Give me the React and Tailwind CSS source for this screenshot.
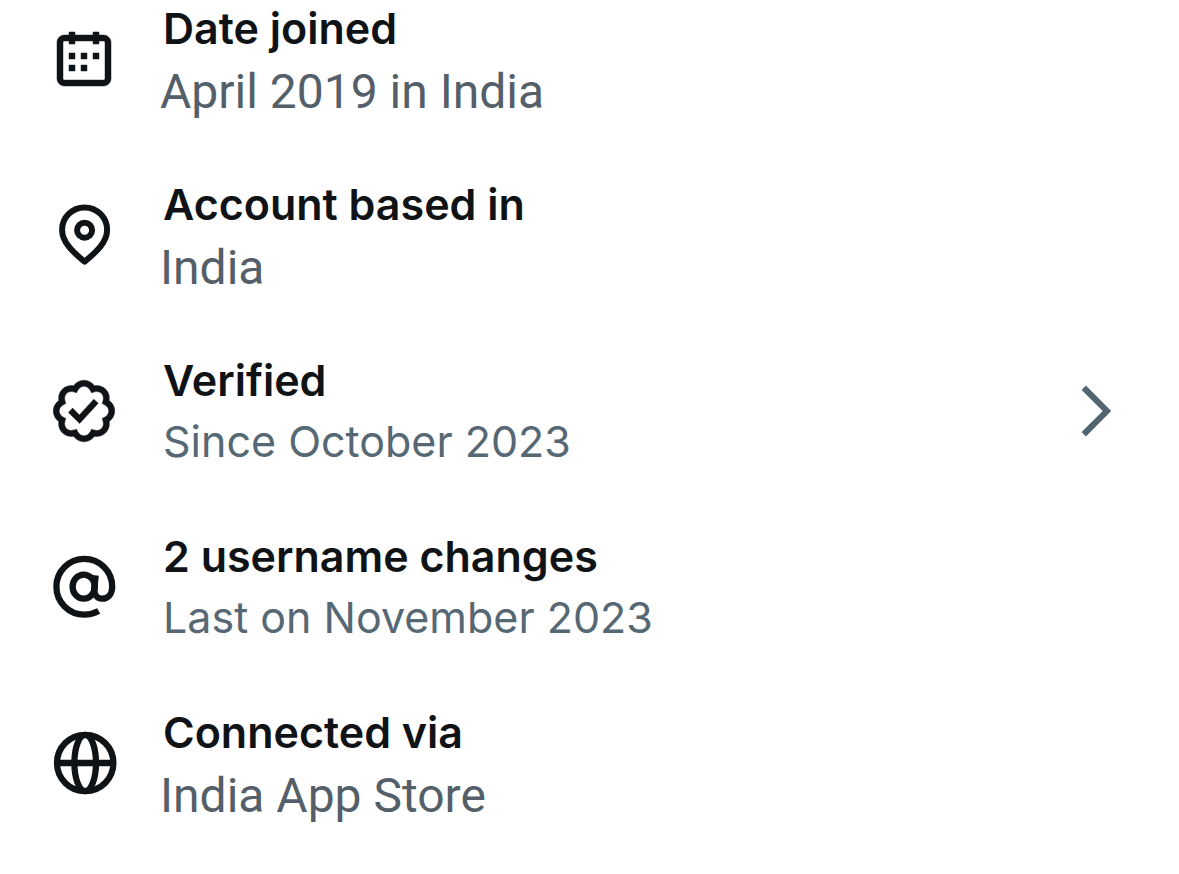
import React from 'react';

const CalendarIcon = () => (
  <svg viewBox="0 0 24 24" fill="currentColor" stroke="currentColor" strokeWidth="0.15" aria-hidden="true" className="size-18">
    <path d="M7 4V3h2v1h6V3h2v1h1.5C19.89 4 21 5.12 21 6.5v12c0 1.38-1.11 2.5-2.5 2.5h-13C4.12 21 3 19.88 3 18.5v-12C3 5.12 4.12 4 5.5 4H7zm0 2H5.5c-.27 0-.5.22-.5.5v12c0 .28.23.5.5.5h13c.28 0 .5-.22.5-.5v-12c0-.28-.22-.5-.5-.5H17v1h-2V6H9v1H7V6zm0 6h2v-2H7v2zm0 4h2v-2H7v2zm4-4h2v-2h-2v2zm0 4h2v-2h-2v2zm4-4h2v-2h-2v2z" />
  </svg>
);

const LocationIcon = () => (
  <svg viewBox="0 0 24 24" fill="none" stroke="currentColor" strokeWidth="2" strokeLinejoin="round" aria-hidden="true" className="size-18">
    <circle cx="12.2" cy="10.4" r="2.5" />
    <path d="M12.2 20.9C8.2 17.6 4.7 14.3 4.7 10.3a7.5 7.5 0 0 1 15 0c0 4-3.5 7.3-7.5 10.6z" />
  </svg>
);

const VerifiedIcon = () => (
  <svg viewBox="0 0 24 24" fill="currentColor" stroke="currentColor" strokeWidth="0.15" aria-hidden="true" className="size-18">
    <path d="M8.52 3.59c.8-1.1 2.04-1.84 3.48-1.84s2.68.74 3.49 1.84c1.34-.21 2.74.14 3.76 1.16s1.37 2.42 1.16 3.77c1.1.8 1.84 2.04 1.84 3.48s-.74 2.68-1.84 3.48c.21 1.34-.14 2.75-1.16 3.77s-2.42 1.37-3.76 1.16c-.8 1.1-2.05 1.84-3.49 1.84s-2.68-.74-3.48-1.84c-1.34.21-2.75-.14-3.77-1.16-1.01-1.02-1.37-2.42-1.16-3.77-1.09-.8-1.84-2.04-1.84-3.48s.75-2.68 1.84-3.48c-.21-1.35.14-2.75 1.16-3.77s2.43-1.37 3.77-1.16zm3.48.16c-.85 0-1.66.53-2.12 1.43l-.38.77-.82-.27c-.96-.32-1.91-.12-2.51.49-.6.6-.8 1.54-.49 2.51l.27.81-.77.39c-.9.46-1.43 1.27-1.43 2.12s.53 1.66 1.43 2.12l.77.39-.27.81c-.31.97-.11 1.91.49 2.51.6.61 1.55.81 2.51.49l.82-.27.38.77c.46.9 1.27 1.43 2.12 1.43s1.66-.53 2.12-1.43l.39-.77.82.27c.96.32 1.9.12 2.51-.49.6-.6.8-1.55.48-2.51l-.26-.81.76-.39c.91-.46 1.43-1.27 1.43-2.12s-.52-1.66-1.43-2.12l-.77-.39.27-.81c.32-.97.12-1.91-.48-2.51-.61-.61-1.55-.81-2.51-.49l-.82.27-.39-.77c-.46-.9-1.27-1.43-2.12-1.43zm4.74 5.68l-6.2 6.77-3.74-3.74 1.41-1.42 2.26 2.26 4.8-5.23 1.47 1.36z" />
  </svg>
);

const AtIcon = () => (
  <svg viewBox="0 0 24 24" fill="none" stroke="currentColor" strokeWidth="2.1" aria-hidden="true" className="size-18">
    <ellipse cx="11.9" cy="11.9" rx="3.7" ry="4" />
    <path d="M15.9 8.1l-.5 4.5c-.1 1.9.9 3.3 2.6 3.3 2.2 0 3.4-1.8 3.4-4A9.3 9.3 0 1 0 12.1 21.2c1.6 0 3.3-.4 4.8-1.2" />
  </svg>
);

const GlobeIcon = () => (
  <svg viewBox="0 0 24 24" fill="none" stroke="currentColor" strokeWidth="2.1" aria-hidden="true" className="size-18">
    <circle cx="12.4" cy="12" r="9.4" />
    <ellipse cx="12.4" cy="12" rx="3.6" ry="9.4" />
    <path d="M3 12h18.8" />
  </svg>
);

const ChevronIcon = () => (
  <svg viewBox="0 0 24 24" fill="currentColor" aria-hidden="true" className="size-18">
    <path d="M14.586 12L7.543 4.96l1.414-1.42L17.414 12l-8.457 8.46-1.414-1.42L14.586 12z" />
  </svg>
);

const items = [
  { icon: CalendarIcon, title: 'Date joined', detail: 'April 2019 in India', system: true },
  { icon: LocationIcon, title: 'Account based in', detail: 'India', system: true },
  { icon: VerifiedIcon, title: 'Verified', detail: 'Since October 2023', link: true },
  { icon: AtIcon, title: '2 username changes', detail: 'Last on November 2023' },
  { icon: GlobeIcon, title: 'Connected via', detail: 'India App Store', system: true }
];

const AccountRow = ({ item }) => {
  const Icon = item.icon;
  const Row = item.link ? 'button' : 'div';

  return (
    <Row className="flex w-full items-start gap-10 px-12 text-left">
      <span className="shrink-0 pt-[23px]">
        <Icon />
      </span>
      <span className="flex min-w-0 flex-1 flex-col">
        <span className="pl-[3px] font-['Inter',sans-serif] text-[43px] leading-[56px] font-semibold">{item.title}</span>
        {item.system ? (
          <span className="font-['Roboto',sans-serif] text-5xl leading-[72px] text-[#545f69]">{item.detail}</span>
        ) : (
          <span className="pl-[3px] font-['Inter',sans-serif] text-[43px] leading-[66px] text-[#566873]">{item.detail}</span>
        )}
      </span>
      {item.link && (
        <span className="shrink-0 pt-[23px] text-[#536471]">
          <ChevronIcon />
        </span>
      )}
    </Row>
  );
};

const App = () => {
  return (
    <main className="min-h-screen bg-white text-[#101316]">
      <ul className="grid auto-rows-fr gap-12">
        {items.map(item => (
          <li key={item.title}>
            <AccountRow item={item} />
          </li>
        ))}
      </ul>
    </main>
  );
};

export default App;
